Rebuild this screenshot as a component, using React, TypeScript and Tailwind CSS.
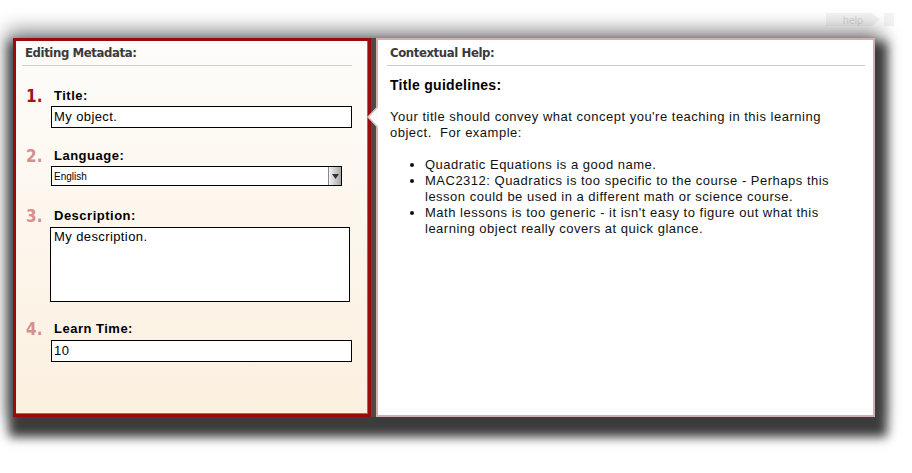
import React from "react";

const head = "font-['DejaVu_Sans_Condensed',sans-serif] font-bold text-[13px] tracking-[-0.4px] leading-[16px] text-[#3a3a3a]";
const body = "font-['Liberation_Sans',Arial,sans-serif]";

function Field({
  n,
  label,
  first,
  children,
  className,
}: {
  n: string;
  label: string;
  first?: boolean;
  children: React.ReactNode;
  className?: string;
}) {
  return (
    <div className={`flex ${className ?? ""}`}>
      <div
        className={`w-[35px] pl-[10px] font-['DejaVu_Sans_Condensed',sans-serif] font-bold text-[17px] leading-[16px] ${
          first ? "text-[#a0161a]" : "text-[#d98e8e]"
        }`}
      >
        {n}
      </div>
      <div className="flex flex-col">
        <div className={`${body} pl-[3px] text-[13px] font-bold leading-[16px] tracking-[0.5px] text-black`}>{label}</div>
        {children}
      </div>
    </div>
  );
}

export default function App() {
  return (
    <div className="relative h-[473px] w-[912px] overflow-hidden bg-white">
      {/* faint tabs behind the shadow */}
      <div className="absolute left-[826px] top-[13px] flex h-[13px] w-[54px] items-center justify-center bg-[#f3f3f3] text-[10px] leading-none text-[#d6d6d6] [clip-path:polygon(0_0,85%_0,100%_50%,85%_100%,0_100%)]">
        help
      </div>
      <div className="absolute left-[884px] top-[13px] h-[13px] w-[10px] bg-[#f3f3f3]" />

      <div className="pl-[13px] pt-[38px]">
        <div className="relative flex h-[379px] w-[862px] gap-[5px] bg-[#4a4a4a] shadow-[4px_12px_10px_8px_#3c3c3c,0_-2px_18px_6px_rgba(0,0,0,0.45)]">
          {/* left panel */}
          <div className="flex w-[358px] flex-col border-[3px] border-[#9c0b0b] bg-gradient-to-b from-[#fdfcfa] to-[#fcf0df] shadow-[inset_-1px_-1px_0_#7a7a7a]">
            <div className={`ml-[6px] mr-[16px] mt-[4px] border-b border-[#cccccc] pb-[4px] pl-[3px] ${head}`}>
              Editing Metadata:
            </div>

            <Field n="1." label="Title:" first className="mt-[22px]">
              <div className={`${body} mt-[2px] flex h-[22px] w-[301px] items-center border border-black bg-white pl-[2px] text-[13px] tracking-[0.4px] text-black`}>
                My object.
              </div>
            </Field>

            <Field n="2." label="Language:" className="mt-[20px]">
              <div className="mt-[2px] flex h-[20px] w-[291px] border border-black bg-white">
                <div className={`${body} flex flex-1 items-center pl-[2px] text-[10px] text-black`}>English</div>
                <div className="flex w-[13px] items-center justify-center border-l border-[#888] bg-gradient-to-r from-[#f4f4f4] to-[#a8a8a8]">
                  <svg width="7" height="5" viewBox="0 0 7 5">
                    <path d="M0 0H7L3.5 5Z" fill="#333" />
                  </svg>
                </div>
              </div>
            </Field>

            <Field n="3." label="Description:" className="mt-[22px]">
              <div className={`${body} -ml-[1px] mt-[3px] h-[75px] w-[300px] border border-black bg-white pl-[3px] pt-[1px] text-[13px] leading-[16px] tracking-[0.4px] text-black`}>
                My description.
              </div>
            </Field>

            <Field n="4." label="Learn Time:" className="mt-[19px]">
              <div className={`${body} mt-[3px] flex h-[22px] w-[301px] items-center border border-black bg-white pl-[2px] text-[13px] tracking-[0.4px] text-black`}>
                10
              </div>
            </Field>
          </div>

          {/* right panel */}
          <div className="relative flex flex-1 flex-col border-2 border-[#d5afaf] bg-white">
            <svg className="absolute -left-[11px] top-[66px]" width="11" height="22" viewBox="0 0 11 22">
              <path d="M11 0L1 11L11 22Z" fill="#fdfbf7" />
              <path d="M11 0.5L1 11L11 21.5" fill="none" stroke="#dcb9b9" strokeWidth="1.5" />
            </svg>
            <div className={`ml-[9px] mr-[8px] mt-[5px] border-b border-[#cccccc] pb-[4px] pl-[3px] ${head}`}>
              Contextual Help:
            </div>
            <div className={`${body} px-[12px] text-[13px] leading-[16px] tracking-[0.5px] text-[#111]`}>
              <p className="mt-[11px] text-[14px] font-bold tracking-[0.3px] text-black">Title guidelines:</p>
              <p className="mt-[16px]">
                Your title should convey what concept you're teaching in this learning
                <br />
                object.&nbsp; For example:
              </p>
              <ul className="mt-[16px] list-disc pl-[35px]">
                <li>Quadratic Equations is a good name.</li>
                <li>
                  MAC2312: Quadratics is too specific to the course - Perhaps this
                  <br />
                  lesson could be used in a different math or science course.
                </li>
                <li>
                  Math lessons is too generic - it isn't easy to figure out what this
                  <br />
                  learning object really covers at quick glance.
                </li>
              </ul>
            </div>
          </div>
        </div>
      </div>
    </div>
  );
}
